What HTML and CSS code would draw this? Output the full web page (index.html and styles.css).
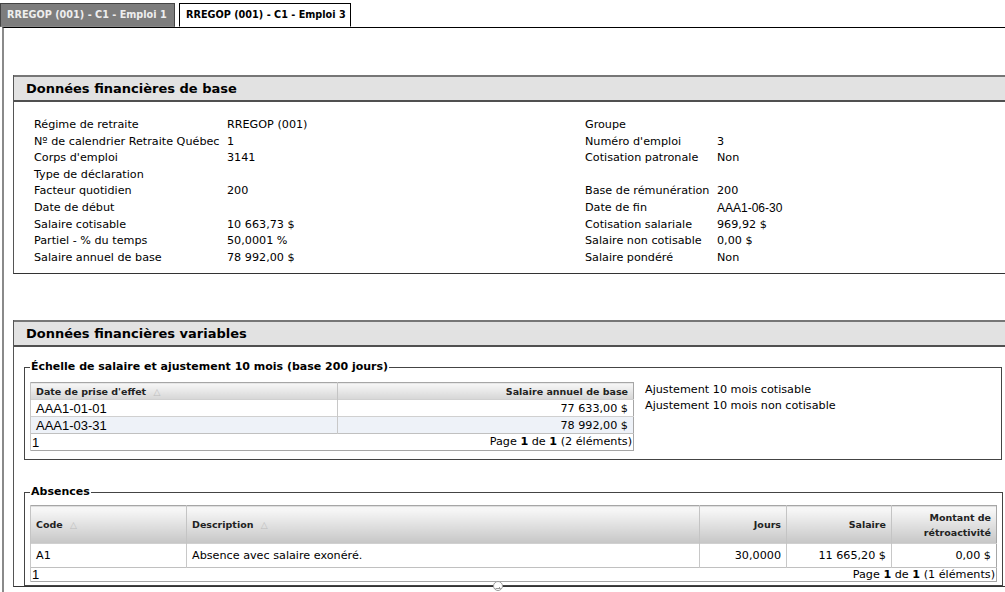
FILE: index.html
```html
<!DOCTYPE html>
<html lang="fr">
<head>
  <meta charset="UTF-8" />
  <title>Données financières</title>
  <link rel="stylesheet" href="styles.css">
</head>
<body>

  <div class="tabs">
    <div class="tab">RREGOP (001) - C1 - Emploi 1</div>
    <div class="tab active">RREGOP (001) - C1 - Emploi 3</div>
  </div>

  <div class="panel">

    <!-- BASE -->
    <div class="section">
      <div class="section-head">Données financières de base</div>
      <div class="section-body base">
        <div class="info-grid">
          <span>Régime de retraite</span><span>RREGOP (001)</span><span>Groupe</span><span></span>
          <span>Nº de calendrier Retraite Québec</span><span>1</span><span>Numéro d'emploi</span><span>3</span>
          <span>Corps d'emploi</span><span>3141</span><span>Cotisation patronale</span><span>Non</span>
          <span>Type de déclaration</span><span></span><span></span><span></span>
          <span>Facteur quotidien</span><span>200</span><span>Base de rémunération</span><span>200</span>
          <span>Date de début</span><span></span><span>Date de fin</span><span class="arial small">AAA1-06-30</span>
          <span>Salaire cotisable</span><span>10 663,73 $</span><span>Cotisation salariale</span><span>969,92 $</span>
          <span>Partiel - % du temps</span><span>50,0001 %</span><span>Salaire non cotisable</span><span>0,00 $</span>
          <span>Salaire annuel de base</span><span>78 992,00 $</span><span>Salaire pondéré</span><span>Non</span>
        </div>
      </div>
    </div>

    <!-- VARIABLES -->
    <div class="section">
      <div class="section-head">Données financières variables</div>
      <div class="section-body">

        <fieldset class="group scale-group">
          <legend>Échelle de salaire et ajustement 10 mois (base 200 jours)</legend>
          <div class="scale">
            <table class="grid grid-small">
              <colgroup><col style="width:307px"><col></colgroup>
              <thead>
                <tr>
                  <th>Date de prise d'effet <span class="sort">&#9651;</span></th>
                  <th class="num">Salaire annuel de base</th>
                </tr>
              </thead>
              <tbody>
                <tr><td class="arial">AAA1-01-01</td><td class="num">77 633,00 $</td></tr>
                <tr class="alt"><td class="arial">AAA1-03-31</td><td class="num">78 992,00 $</td></tr>
              </tbody>
              <tfoot>
                <tr><td colspan="2"><div class="pager"><span class="arial">1</span><span>Page <b>1</b> de <b>1</b> (2 éléments)</span></div></td></tr>
              </tfoot>
            </table>
            <div class="adjust">
              <div>Ajustement 10 mois cotisable</div>
              <div>Ajustement 10 mois non cotisable</div>
            </div>
          </div>
        </fieldset>

        <fieldset class="group absence-group">
          <legend>Absences</legend>
          <table class="grid grid-large">
            <colgroup>
              <col style="width:156px"><col style="width:513px"><col style="width:87px"><col style="width:105px"><col>
            </colgroup>
            <thead>
              <tr>
                <th>Code <span class="sort">&#9651;</span></th>
                <th>Description <span class="sort">&#9651;</span></th>
                <th class="num">Jours</th>
                <th class="num">Salaire</th>
                <th class="num">Montant de<br>rétroactivité</th>
              </tr>
            </thead>
            <tbody>
              <tr>
                <td>A1</td>
                <td>Absence avec salaire exonéré.</td>
                <td class="num">30,0000</td>
                <td class="num">11 665,20 $</td>
                <td class="num">0,00 $</td>
              </tr>
            </tbody>
            <tfoot>
              <tr><td colspan="5"><div class="pager"><span class="arial">1</span><span>Page <b>1</b> de <b>1</b> (1 éléments)</span></div></td></tr>
            </tfoot>
          </table>
          <span class="grip">
            <svg width="14" height="12" viewBox="0 0 14 12"><circle cx="7" cy="6" r="4.5" fill="#fff" stroke="#999" stroke-width="1"/><path d="M4.5 8.5 L9.5 8.5 M9.5 8.5 L8 7" fill="none" stroke="#999" stroke-width="1"/></svg>
          </span>
        </fieldset>

      </div>
    </div>

  </div>

</body>
</html>
```

FILE: styles.css
```css
html, body {
  margin: 0;
  overflow: hidden;
}

body {
  font-family: 'DejaVu Sans', Verdana, sans-serif;
  font-size: 11.2px;
  color: #000;
  background: #fff;
}

.arial {
  font-family: 'Liberation Sans', Arial, sans-serif;
  font-size: 13px;
}

.arial.small {
  font-size: 12px;
}

/* tabs */
.tabs {
  display: flex;
  gap: 4px;
  padding-top: 3px;
  position: relative;
  z-index: 1;
}

.tab {
  height: 22px;
  line-height: 22px;
  padding: 0 6px;
  width: 161px;
  font-size: 9.7px;
  font-weight: bold;
  color: #eee;
  background: #7d7d7d;
  border: 1px solid #444;
  border-bottom-color: #888;
  white-space: nowrap;
}

.tab.active {
  width: 158px;
  color: #000;
  background: #fff;
  border-color: #000;
  border-bottom: 1px solid #fff;
  margin-bottom: -1px;
}

/* panel */
.panel {
  border-top: 1px solid #000;
  border-left: 2px solid #8a8a8a;
  margin-left: 2px;
  padding: 47px 0 0 9px;
  height: 600px;
}

.section {
  width: 998px;
  border-left: 1px solid #555;
  border-right: 1px solid #555;
  border-bottom: 1px solid #333;
  margin-bottom: 46px;
}

.section-head {
  height: 23px;
  line-height: 23px;
  padding-left: 12px;
  background: #e2e2e2;
  border-top: 2px solid #767676;
  border-bottom: 2px solid #505050;
  font-size: 13px;
  font-weight: bold;
}

.section-body.base {
  padding: 15px 0 7px 20px;
}

.info-grid {
  display: grid;
  grid-template-columns: 193px 358px 132px auto;
  grid-auto-rows: 16.6px;
  line-height: 16.6px;
  white-space: nowrap;
}

/* fieldsets */
.group {
  margin: 12px 10px 0 10px;
  padding: 7px 5px 8px 5px;
  border: 1px solid #444;
  position: relative;
}

.group legend {
  padding: 0 1px;
  font-size: 11px;
  font-weight: bold;
  line-height: 16px;
}

.absence-group {
  margin-top: 24px;
  padding-top: 5px;
  padding-bottom: 3px;
}

.scale {
  display: flex;
  align-items: flex-start;
  gap: 11px;
}

.adjust {
  line-height: 16px;
  white-space: nowrap;
}

/* grids */
.grid {
  border-collapse: collapse;
  table-layout: fixed;
  border: 1px solid #a6a6a6;
}

.grid-small {
  width: 604px;
}

.grid-large {
  width: 967px;
}

.grid th {
  font-size: 9.5px;
  font-weight: bold;
  text-align: left;
  color: #222;
  padding: 0 5px;
  border-left: 1px solid #c4c4c4;
  white-space: nowrap;
}

.grid-small th {
  height: 16px;
  background: linear-gradient(#f7f7f7, #d6d6d6);
}

.grid-large th {
  height: 37px;
  background: linear-gradient(#f6f6f6 10%, #c6c6c6);
  line-height: 15px;
}

.grid td {
  padding: 0 5px;
  border-left: 1px solid #c8c8c8;
  border-top: 1px solid #d0d0d0;
  white-space: nowrap;
}

.grid-small td {
  height: 16px;
}

.grid-large tbody td {
  height: 23px;
}

.grid .num {
  text-align: right;
}

.grid tr.alt td {
  background: #eef2f8;
}

.sort {
  color: #bdbdbd;
  font-size: 9px;
  font-weight: normal;
  margin-left: 4px;
}

.grid tfoot td {
  padding: 0 1px;
  border-top: 1px solid #c0c0c0;
}

.grid-small tfoot td {
  height: 16px;
}

.grid-large tfoot td {
  height: 13px;
  line-height: 13px;
}

.pager {
  display: flex;
  justify-content: space-between;
}

.grip {
  position: absolute;
  left: 466px;
  bottom: -7px;
  line-height: 0;
}
```
